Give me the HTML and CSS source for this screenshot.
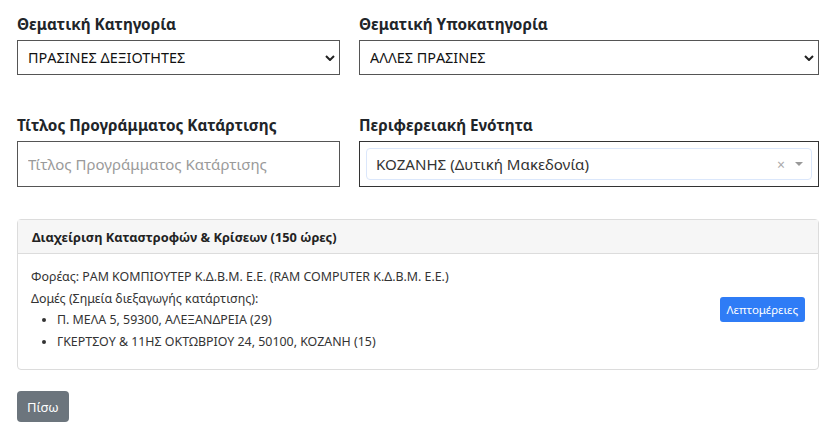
FILE: index.html
```html
<!DOCTYPE html>
<html lang="el">
<head>
  <meta charset="UTF-8">
  <title>Αναζήτηση Προγραμμάτων Κατάρτισης</title>
  <link rel="stylesheet" href="styles.css">
</head>
<body>
<div class="page">
  <div class="filters">
    <div class="field">
      <label class="field__label" for="cat">Θεματική Κατηγορία</label>
      <select class="field__select" id="cat">
        <option>ΠΡΑΣΙΝΕΣ ΔΕΞΙΟΤΗΤΕΣ</option>
      </select>
    </div>
    <div class="field">
      <label class="field__label" for="subcat">Θεματική Υποκατηγορία</label>
      <select class="field__select" id="subcat">
        <option>ΑΛΛΕΣ ΠΡΑΣΙΝΕΣ</option>
      </select>
    </div>
    <div class="field">
      <label class="field__label" for="title">Τίτλος Προγράμματος Κατάρτισης</label>
      <input class="field__input" type="text" id="title" placeholder="Τίτλος Προγράμματος Κατάρτισης">
    </div>
    <div class="field">
      <label class="field__label">Περιφερειακή Ενότητα</label>
      <div class="combo">
        <div class="combo__inner">
          <span class="combo__value">ΚΟΖΑΝΗΣ (Δυτική Μακεδονία)</span>
          <span class="combo__clear">×</span>
          <span class="combo__arrow"></span>
        </div>
      </div>
    </div>
  </div>

  <div class="card">
    <div class="card__header">Διαχείριση Καταστροφών &amp; Κρίσεων (150 ώρες)</div>
    <div class="card__body">
      <div class="card__text">
        <p>Φορέας: ΡΑΜ ΚΟΜΠΙΟΥΤΕΡ Κ.Δ.Β.Μ. Ε.Ε. (RAM COMPUTER Κ.Δ.Β.Μ. Ε.Ε.)</p>
        <p>Δομές (Σημεία διεξαγωγής κατάρτισης):</p>
        <ul>
          <li>Π. ΜΕΛΑ 5, 59300, ΑΛΕΞΑΝΔΡΕΙΑ (29)</li>
          <li>ΓΚΕΡΤΣΟΥ &amp; 11ΗΣ ΟΚΤΩΒΡΙΟΥ 24, 50100, ΚΟΖΑΝΗ (15)</li>
        </ul>
      </div>
      <button class="btn btn--primary">Λεπτομέρειες</button>
    </div>
  </div>

  <button class="btn btn--secondary">Πίσω</button>
</div>
</body>
</html>
```

FILE: styles.css
```css
body {
  margin: 0;
  font-family: "Noto Sans", "Open Sans", sans-serif;
  color: #212529;
  background: #fff;
}
.page {
  padding: 13px 20px 10px 17px;
}
.filters {
  display: grid;
  grid-template-columns: 323px 460px;
  column-gap: 19px;
  row-gap: 39px;
}
.field__label {
  display: block;
  font-size: 15.3px;
  font-weight: 700;
  margin-bottom: 5px;
  line-height: 22px;
}
.field__select {
  display: block;
  width: 100%;
  height: 35px;
  padding: 0 10px;
  border: 1px solid #555;
  border-radius: 0;
  background: #fff url("data:image/svg+xml,%3Csvg xmlns='http://www.w3.org/2000/svg' width='10' height='6' viewBox='0 0 10 6'%3E%3Cpath d='M1 1l4 4 4-4' fill='none' stroke='%23222' stroke-width='2'/%3E%3C/svg%3E") no-repeat right 4px center;
  -webkit-appearance: none;
  appearance: none;
  font-family: inherit;
  font-size: 14.4px;
  color: #111;
}
.field__input {
  display: block;
  box-sizing: border-box;
  width: 100%;
  height: 46px;
  padding: 0 10px;
  border: 1px solid #555;
  border-radius: 0;
  font-family: inherit;
  font-size: 15px;
  color: #111;
}
.field__input::placeholder {
  color: #9a9a9a;
}
.combo {
  box-sizing: border-box;
  height: 46px;
  border: 1px solid #333;
  padding: 6px;
}
.combo__inner {
  display: flex;
  align-items: center;
  height: 100%;
  box-sizing: border-box;
  border: 1px solid #dbe7fb;
  border-radius: 4px;
  padding: 0 8px 0 9px;
  font-size: 15.1px;
  color: #333;
}
.combo__value {
  flex: 1;
}
.combo__clear {
  color: #aaa;
  font-size: 14px;
  margin-right: 10px;
}
.combo__arrow {
  width: 0;
  height: 0;
  border-left: 4px solid transparent;
  border-right: 4px solid transparent;
  border-top: 4px solid #999;
}
.card {
  margin-top: 32px;
  border: 1px solid #dcdcdc;
  border-radius: 4px;
}
.card__header {
  background: #f6f6f6;
  border-bottom: 1px solid #dcdcdc;
  padding: 0 14px;
  height: 33px;
  line-height: 34px;
  font-size: 12.8px;
  font-weight: 700;
  color: #222;
}
.card__body {
  display: flex;
  align-items: center;
  padding: 12px 13px 17px 13px;
  font-size: 12.4px;
  color: #333;
}
.card__text {
  flex: 1;
}
.card__text p {
  margin: 0;
  line-height: 21.5px;
}
.card__text ul {
  margin: 0;
  padding-left: 26px;
}
.card__text li {
  line-height: 21.5px;
}
.btn {
  border: 0;
  border-radius: 4px;
  color: #fff;
  font-family: inherit;
  cursor: pointer;
}
.btn--primary {
  background: #2f7cf6;
  font-size: 11.5px;
  height: 25px;
  padding: 0 7px;
  border-radius: 3px;
}
.btn--secondary {
  margin-top: 21px;
  background: #6c757d;
  font-size: 13px;
  height: 31px;
  padding: 0 10px;
}
```
